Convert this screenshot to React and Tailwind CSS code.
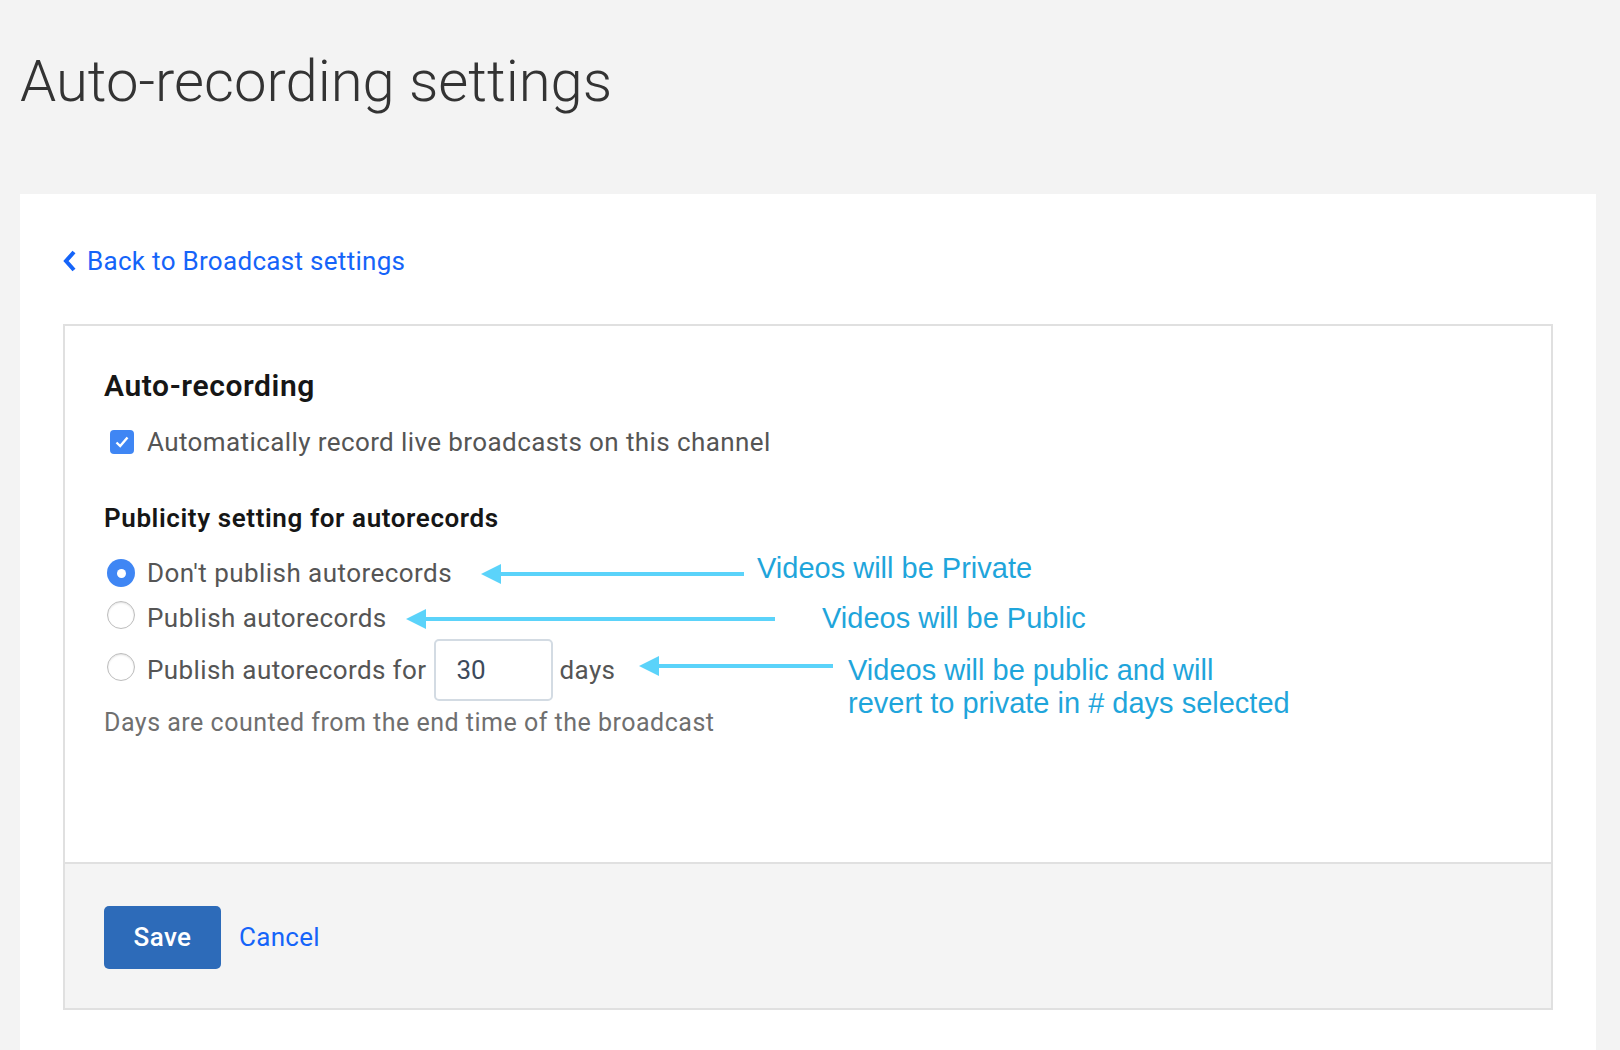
import React, { useState } from 'react';

const font = { fontFamily: 'Roboto, "Noto Sans", sans-serif' };
const noteFont = { fontFamily: '"Liberation Sans", Arial, sans-serif' };

const Arrow = ({ width }) => (
  <svg width={width} height="20" viewBox={`0 0 ${width} 20`} className="block">
    <line x1="18" y1="10" x2={width} y2="10" stroke="#5bd3fa" strokeWidth="4" />
    <polygon points="0,10 20,0 20,20" fill="#5bd3fa" />
  </svg>
);

const Radio = ({ checked, onClick }) => (
  <button
    onClick={onClick}
    className={
      checked
        ? 'w-[28px] h-[28px] rounded-full bg-[#3f86f4] flex items-center justify-center shrink-0'
        : 'w-[28px] h-[28px] rounded-full bg-white border-[1.5px] border-[#bdbdbd] shadow-[inset_0_1px_2px_rgba(0,0,0,0.12)] shrink-0'
    }
  >
    {checked && <span className="block w-[9px] h-[9px] rounded-full bg-white" />}
  </button>
);

export default function App() {
  const [autoRecord, setAutoRecord] = useState(true);
  const [publicity, setPublicity] = useState('none');
  const [days, setDays] = useState('30');

  return (
    <div className="min-h-screen bg-[#f3f3f3] overflow-hidden" style={font}>
      {/* Page title */}
      <h1 className="pt-[52px] pl-[20px] text-[58px] leading-[58px] font-light text-[#333333]">
        Auto-recording settings
      </h1>

      <div className="mt-[84px] ml-[20px] mr-[24px] bg-white pt-[51px] pb-[60px] px-[43px]">
        <a href="#" className="flex items-center gap-[11px] text-[#1564f9] text-[26px] leading-[32px] tracking-[0.3px]">
          <svg width="13" height="22" viewBox="0 0 13 22">
            <path d="M11 2 L3 11 L11 20" fill="none" stroke="#1564f9" strokeWidth="4" />
          </svg>
          Back to Broadcast settings
        </a>

        <div className="mt-[47px] border-2 border-[#e0e0e0]">
          <div className="relative pt-[42px] pb-[123px] px-[39px]">
            <h2 className="text-[30px] leading-[36px] font-semibold text-[#161616] tracking-[0.6px]">Auto-recording</h2>

            <label className="mt-[22px] flex items-center gap-[13px] h-[32px] cursor-pointer">
              <span
                onClick={() => setAutoRecord(!autoRecord)}
                className={
                  autoRecord
                    ? 'ml-[6px] w-[24px] h-[24px] rounded-[4px] bg-[#3f86f4] flex items-center justify-center'
                    : 'ml-[6px] w-[24px] h-[24px] rounded-[4px] bg-white border-2 border-[#c4c4c4]'
                }
              >
                {autoRecord && (
                  <svg width="16" height="16" viewBox="0 0 16 16">
                    <path d="M2.5 8.5 L6.2 12 L13.5 3.5" fill="none" stroke="white" strokeWidth="2.4" />
                  </svg>
                )}
              </span>
              <span className="text-[26px] text-[#555555] tracking-[0.4px]">Automatically record live broadcasts on this channel</span>
            </label>

            <h3 className="mt-[44px] text-[26px] leading-[32px] font-semibold text-[#161616] tracking-[0.6px]">
              Publicity setting for autorecords
            </h3>

            <div className="mt-[21px] flex items-center gap-[12px] h-[36px]">
              <span className="ml-[3px]"><Radio checked={publicity === 'none'} onClick={() => setPublicity('none')} /></span>
              <span className="text-[26px] text-[#555555] tracking-[0.45px]">Don't publish autorecords</span>
            </div>
            <div className="mt-[9px] flex items-center gap-[12px] h-[36px]">
              <span className="ml-[3px]"><Radio checked={publicity === 'public'} onClick={() => setPublicity('public')} /></span>
              <span className="text-[26px] text-[#555555] tracking-[0.45px]">Publish autorecords</span>
            </div>
            <div className="mt-[3px] flex items-center h-[62px]">
              <span className="ml-[3px]"><Radio checked={publicity === 'days'} onClick={() => setPublicity('days')} /></span>
              <span className="ml-[12px] text-[26px] text-[#555555] tracking-[0.4px]">Publish autorecords for</span>
              <input
                value={days}
                onChange={(e) => setDays(e.target.value)}
                className="ml-[7px] w-[119px] h-[62px] border-2 border-[#d3dbe3] rounded-[5px] pl-[21px] text-[26px] text-[#3d4a5c] outline-none"
              />
              <span className="ml-[7px] text-[26px] text-[#555555] tracking-[0.4px]">days</span>
            </div>
            <p className="mt-[6px] text-[25px] leading-[32px] text-[#6f6f6f] tracking-[0.5px]">
              Days are counted from the end time of the broadcast
            </p>

            {/* annotations */}
            <div className="absolute left-[416px] top-[238px]"><Arrow width={263} /></div>
            <div className="absolute left-[692px] top-[224px] text-[29px] leading-[36px] text-[#1fa5db]" style={noteFont}>
              Videos will be Private
            </div>
            <div className="absolute left-[341px] top-[283px]"><Arrow width={369} /></div>
            <div className="absolute left-[757px] top-[274px] text-[29px] leading-[36px] text-[#1fa5db]" style={noteFont}>
              Videos will be Public
            </div>
            <div className="absolute left-[574px] top-[330px]"><Arrow width={194} /></div>
            <div className="absolute left-[783px] top-[328px] text-[29px] leading-[33px] text-[#1fa5db]" style={noteFont}>
              Videos will be public and will
              <br />
              revert to private in # days selected
            </div>
          </div>

          <div className="border-t-2 border-[#e0e0e0] bg-[#f4f4f4] pt-[42px] pb-[39px] px-[39px] flex items-center gap-[18px]">
            <button className="w-[117px] h-[63px] rounded-[5px] bg-[#2d6bb9] text-white text-[26px] font-medium tracking-[0.4px]">Save</button>
            <a href="#" className="text-[26px] text-[#1564f9] tracking-[0.3px]">Cancel</a>
          </div>
        </div>
      </div>
    </div>
  );
}
